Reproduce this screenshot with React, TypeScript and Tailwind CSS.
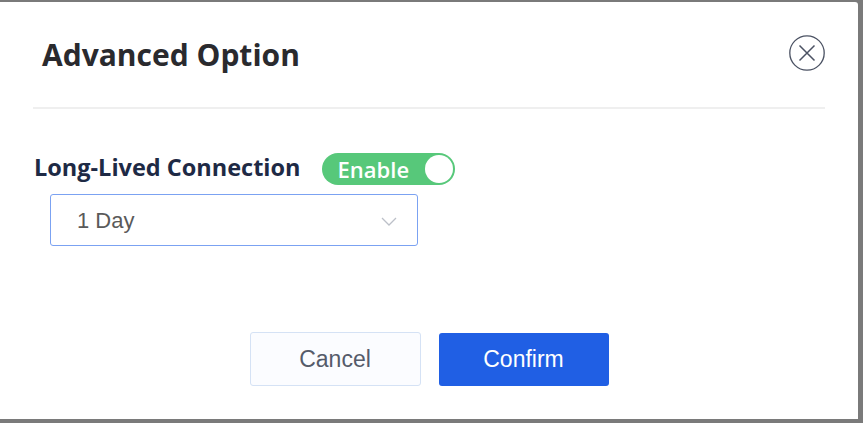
export default function App() {
  return (
    <div className="w-[863px] h-[423px] bg-[#7a7a7a] pt-[2px] pr-[5px] pb-[4px]">
      <div
        className="relative h-full w-full bg-white rounded-tr-[3px] flex flex-col"
        style={{ fontFamily: '"Open Sans", "Noto Sans", sans-serif' }}
      >
        {/* header */}
        <div className="flex items-center justify-between pl-[42px] pr-[33px] h-[105px]">
          <h2 className="text-[30px] font-bold text-[#2a2a2e] leading-none">Advanced Option</h2>
          <button className="w-[36px] h-[36px] flex items-center justify-center -mt-[3px]">
            <svg width="36" height="36" viewBox="0 0 36 36" fill="none">
              <circle cx="18" cy="18" r="17.2" stroke="#4b5263" strokeWidth="1.3" />
              <path d="M10.5 10.5 L25.5 25.5 M25.5 10.5 L10.5 25.5" stroke="#4b5263" strokeWidth="1.5" />
            </svg>
          </button>
        </div>
        <div className="mx-[33px] h-[2px] bg-[#efefef]" />

        {/* body */}
        <div className="pl-[34px] pt-[44px]">
          <div className="flex items-center gap-[21px]">
            <span className="text-[23.5px] font-bold text-[#1e2a45] leading-none -mt-[2px]">Long-Lived Connection</span>
            <div className="w-[133px] h-[32px] rounded-full bg-[#57c87a] flex items-center justify-between pl-[16px] pr-[2px]">
              <span className="text-[22px] text-white font-semibold leading-none -mt-[1px]">Enable</span>
              <span className="w-[28px] h-[28px] rounded-full bg-white" />
            </div>
          </div>
          <div className="ml-[16px] mt-[9px] w-[368px] h-[52px] border-[1.5px] border-[#7ba2f2] rounded-[3px] flex items-center justify-between pl-[26px] pr-[20px]">
            <span
              className="text-[22px] text-[#5a5a5a]"
              style={{ fontFamily: '"Liberation Sans", Arial, sans-serif' }}
            >
              1 Day
            </span>
            <svg width="16" height="9" viewBox="0 0 16 9" fill="none" className="mt-[2px]">
              <path d="M1 1 L8 8 L15 1" stroke="#bcc0c8" strokeWidth="1.3" />
            </svg>
          </div>
        </div>

        {/* footer */}
        <div
          className="flex items-end justify-center gap-[18px] mt-[86px]"
          style={{ fontFamily: '"Liberation Sans", Arial, sans-serif' }}
        >
          <button className="w-[171px] h-[54px] rounded-[3px] border border-[#d5e2f5] bg-[#fbfcff] text-[23px] text-[#555b6a]">
            Cancel
          </button>
          <button className="w-[170px] h-[53px] rounded-[3px] bg-[#205fe4] text-[23px] text-white">
            Confirm
          </button>
        </div>
      </div>
    </div>
  );
}
